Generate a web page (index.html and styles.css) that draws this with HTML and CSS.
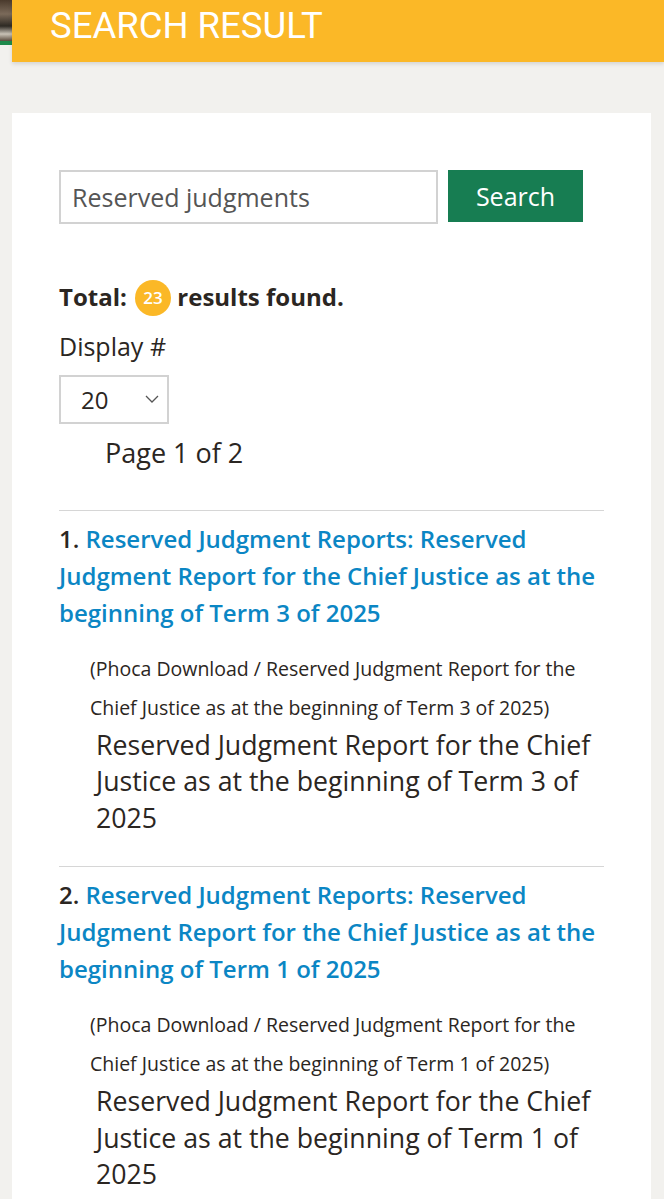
FILE: index.html
```html
<!DOCTYPE html>
<html lang="en">
<head>
  <meta charset="UTF-8">
  <meta name="viewport" content="width=device-width, initial-scale=1.0">
  <title>Search Result</title>
  <link rel="stylesheet" href="styles.css">
</head>
<body>
  <div class="top">
    <div class="photo-edge"></div>
    <header class="page-head">
      <h1>SEARCH RESULT</h1>
    </header>
  </div>

  <main class="card">
    <form class="search-form">
      <input type="text" class="search-input" value="Reserved judgments">
      <button type="button" class="search-btn">Search</button>
    </form>

    <p class="total">Total: <span class="badge">23</span> results found.</p>

    <label class="display-label" for="limit">Display #</label>
    <div class="select" id="limit">
      <span>20</span>
      <svg width="14" height="8" viewBox="0 0 14 8"><path d="M1 1l6 6 6-6" fill="none" stroke="#555" stroke-width="1.3"/></svg>
    </div>

    <p class="pages">Page 1 of 2</p>

    <div class="result">
      <p class="result-title"><span class="result-num">1.</span> <a href="#">Reserved Judgment Reports: Reserved Judgment Report for the Chief Justice as at the beginning of Term 3 of 2025</a></p>
      <p class="result-cat">(Phoca Download / Reserved Judgment Report for the Chief Justice as at the beginning of Term 3 of 2025)</p>
      <p class="result-text">Reserved Judgment Report for the Chief Justice as at the beginning of Term 3 of 2025</p>
    </div>

    <div class="result">
      <p class="result-title"><span class="result-num">2.</span> <a href="#">Reserved Judgment Reports: Reserved Judgment Report for the Chief Justice as at the beginning of Term 1 of 2025</a></p>
      <p class="result-cat">(Phoca Download / Reserved Judgment Report for the Chief Justice as at the beginning of Term 1 of 2025)</p>
      <p class="result-text">Reserved Judgment Report for the Chief Justice as at the beginning of Term 1 of 2025</p>
    </div>
  </main>
</body>
</html>
```

FILE: styles.css
```css
body {
  margin: 0;
  background-color: #f2f1ee;
  font-family: "Open Sans", "Noto Sans", sans-serif;
  color: #2b2622;
}
.top {
  display: flex;
  align-items: flex-start;
}
.photo-edge {
  width: 12px;
  height: 45px;
  background: linear-gradient(to bottom, #4a3a2c 0, #7b6a5a 14px, #2e2a24 26px, #c9c2b6 34px, #5b4c3e 41px, #1f8a4c 41px, #1f8a4c 45px);
}
.page-head {
  flex: 1;
  height: 62px;
  background-color: #fbb827;
  box-shadow: 0 2px 4px rgba(0, 0, 0, 0.12);
}
.page-head h1 {
  margin: 0;
  padding: 5px 0 0 38px;
  font-family: Roboto, sans-serif;
  font-weight: 400;
  font-size: 36.5px;
  line-height: 41px;
  color: #fff;
}
.card {
  margin: 51px 13px 0 12px;
  padding: 57px 47px 40px;
  background: #fff;
}
.search-form {
  display: flex;
  align-items: flex-start;
  gap: 10px;
}
.search-input {
  width: 379px;
  height: 54px;
  box-sizing: border-box;
  margin: 0;
  border: 2px solid #d2d2d2;
  padding: 0 11px;
  font-family: inherit;
  font-size: 25px;
  color: #555;
}
.search-btn {
  width: 135px;
  height: 52px;
  border: none;
  background-color: #177d52;
  color: #fff;
  font-family: inherit;
  font-size: 25px;
}
.total {
  margin: 55px 0 0;
  font-weight: 700;
  font-size: 24px;
  line-height: 36px;
}
.badge {
  display: inline-block;
  width: 36px;
  height: 36px;
  border-radius: 50%;
  background-color: #fbb827;
  color: #fff;
  font-size: 17px;
  font-weight: 600;
  line-height: 36px;
  text-align: center;
  vertical-align: middle;
  margin: -4px 0 0 2px;
}
.display-label {
  display: block;
  margin-top: 12px;
  font-size: 25px;
  line-height: 36px;
}
.select {
  display: flex;
  align-items: center;
  justify-content: space-between;
  box-sizing: border-box;
  width: 110px;
  height: 49px;
  margin-top: 11px;
  padding: 0 8px 0 20px;
  border: 2px solid #d2d2d2;
  font-size: 24px;
}
.pages {
  margin: 10px 0 38px 46px;
  font-size: 27px;
  line-height: 38px;
}
.result {
  border-top: 1px solid #d6d6d6;
  padding: 9px 0 30px;
}
.result p {
  margin: 0;
}
.result-title {
  font-size: 24px;
  font-weight: 600;
  line-height: 37px;
}
.result-num {
  color: #2b2622;
}
.result-title a {
  color: #0b86c4;
  text-decoration: none;
}
.result .result-cat {
  margin: 18px 0 0 31px;
  font-size: 19.5px;
  line-height: 39px;
}
.result .result-text {
  margin-left: 37px;
  font-size: 26.7px;
  line-height: 36.5px;
}
```
